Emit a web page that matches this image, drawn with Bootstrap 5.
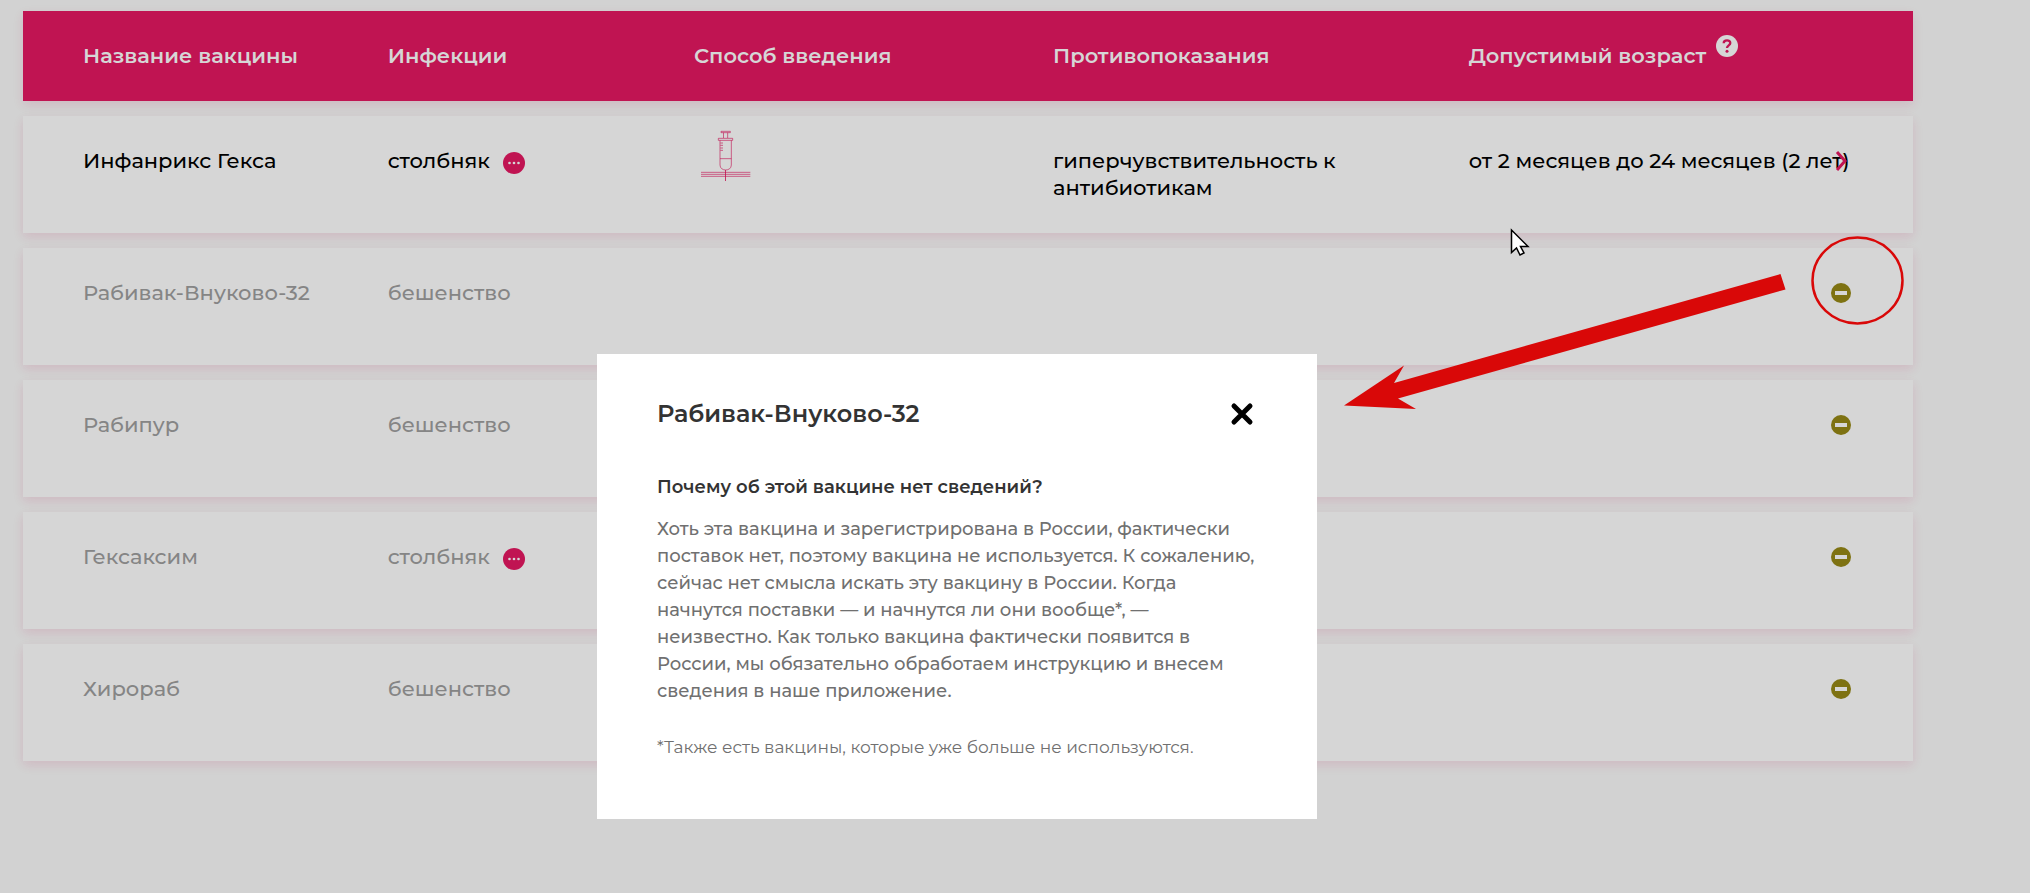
<!DOCTYPE html>
<html lang="ru">
<head>
<meta charset="utf-8">
<meta name="viewport" content="width=device-width, initial-scale=1">
<title>Вакцины</title>
<link rel="stylesheet" href="https://cdn.jsdelivr.net/npm/bootstrap@5.3.0/dist/css/bootstrap.min.css">
<style>
  :root { --brand: #c01452; --muted: #858585; }
  body { background: #d2d2d2; color: #000; font-family: Montserrat, Inter, sans-serif; font-size: 21px; font-weight: 500; line-height: 27px; padding-top: 11px; overflow-x: hidden; }
  .vaccines { width: calc(100% - 140px); margin: -15px 0 0 23px; table-layout: fixed; border-collapse: separate; border-spacing: 0 15px; }
  .vaccines tr { background: #d6d6d6; box-shadow: 0 4px 10px rgba(192, 20, 82, .12); }
  .vaccines td, .vaccines th { padding: 31px 0 0; vertical-align: top; white-space: nowrap; }
  .vaccines td { height: 117px; }
  .vaccines thead td, .vaccines th { height: 90px; font-weight: 600; }
  .vaccines thead tr { background: var(--brand); color: #d6d6d6; }
  .vaccines tr > :first-child { padding-left: 60px; }
  .vaccines td.route { padding: 14px 0 0 6px; }
  .vaccines .absent { color: var(--muted); }
  .c-name { width: 19.3%; } .c-inf { width: 16.2%; } .c-route { width: 19%; } .c-contra { width: 22%; } .c-age { width: 19.1%; }
  .plain { border: 0; padding: 0; background: none; color: inherit; display: inline-flex; }
  .plain svg, .route svg { display: block; }
  .more { margin-left: 13px; vertical-align: -6px; }
  .help { margin: -7px 0 0 10px; }
  .act { margin: 4px 0 0 1px; }
  .overlay { position: absolute; inset: 0 116px auto 0; padding-top: 354px; }
  .dialog { width: 720px; min-height: 465px; background: #fff; padding: 46px 60px 55px; color: #707070; font-size: 18px; }
  .dialog h2 { font-size: 24px; line-height: 28px; font-weight: 600; color: #333; }
  .dialog h3 { font-size: 18px; line-height: 27px; font-weight: 600; color: #333; margin: 46px 0 15px; }
  .dialog small { display: block; font-size: 17px; font-weight: 400; margin-top: 29px; white-space: nowrap; }
  .notes { position: absolute; left: 1340px; top: 225px; pointer-events: none; }
</style>
</head>
<body>
<svg class="d-none" aria-hidden="true">
  <symbol id="dots" viewBox="0 0 22 22"><circle cx="11" cy="11" r="11" fill="#c01452"/><g fill="#d6d6d6"><circle cx="6.5" cy="11" r="1.3"/><circle cx="11" cy="11" r="1.3"/><circle cx="15.500" cy="11" r="1.300"/></g></symbol>
  <symbol id="minus" viewBox="0 0 20 20"><circle cx="10" cy="10" r="10" fill="#7e7212"/><path fill="#d6d6d6" d="M4 8h12v4H4z"/></symbol>
</svg>

<table class="vaccines">
  <colgroup><col class="c-name"><col class="c-inf"><col class="c-route"><col class="c-contra"><col class="c-age"><col></colgroup>
  <thead>
    <tr>
      <th scope="col">Название вакцины</th>
      <th scope="col">Инфекции</th>
      <th scope="col">Способ введения</th>
      <th scope="col">Противопоказания</th>
      <th scope="col"><div class="d-flex align-items-start">Допустимый возраст<button class="plain help" type="button" aria-label="Подсказка"><svg width="22" height="22" viewBox="0 0 22 22"><circle cx="11" cy="11" r="11" fill="#d6d6d6"/><path d="M7.700 8.300C7.700 4.400 14.300 4.400 14.300 8.100 14.300 10.400 11 10.400 11 13" fill="none" stroke="#c01452" stroke-width="2.300"/><circle cx="11" cy="16.200" r="1.500" fill="#c01452"/></svg></button></div></th>
      <td></td>
    </tr>
  </thead>
  <tbody>
    <tr>
      <td>Инфанрикс Гекса</td>
      <td>столбняк<button class="plain more" type="button" aria-label="Все инфекции"><svg width="22" height="22"><use href="#dots"/></svg></button></td>
      <td class="route"><svg width="51" height="51" viewBox="33 60 153 153" fill="none" stroke="#c01452" stroke-width="2.500" stroke-opacity=".75" role="img" aria-label="Внутримышечно"><path d="M96 64h28v4H96zM103.500 68v16M116 68v16M88 85h43v6H88zM93 91v74c0 20 34 20 34 0V91M93 146h34M94 99h8M94 106h8M94 114h8M94 121h8M36 187h148M36 193h148M36 199h148"/><path d="M109.500 180v33" stroke-opacity="1"/></svg></td>
      <td>гиперчувствительность к<br>антибиотикам</td>
      <td>от 2 месяцев до 24 месяцев (2 лет)</td>
      <td><button class="plain act position-relative" type="button" aria-label="Подробнее"><svg width="20" height="20" viewBox="0 0 20 20"><path d="M6 1l8 9-8 9" fill="none" stroke="#c01452" stroke-width="3"/></svg></button></td>
    </tr>
    <tr class="absent">
      <td>Рабивак-Внуково-32</td><td>бешенство</td><td></td><td></td><td></td>
      <td><button class="plain act" type="button" aria-label="Нет сведений"><svg width="20" height="20"><use href="#minus"/></svg></button></td>
    </tr>
    <tr class="absent">
      <td>Рабипур</td><td>бешенство</td><td></td><td></td><td></td>
      <td><button class="plain act" type="button" aria-label="Нет сведений"><svg width="20" height="20"><use href="#minus"/></svg></button></td>
    </tr>
    <tr class="absent">
      <td>Гексаксим</td><td>столбняк<button class="plain more" type="button" aria-label="Все инфекции"><svg width="22" height="22"><use href="#dots"/></svg></button></td><td></td><td></td><td></td>
      <td><button class="plain act" type="button" aria-label="Нет сведений"><svg width="20" height="20"><use href="#minus"/></svg></button></td>
    </tr>
    <tr class="absent">
      <td>Хирораб</td><td>бешенство</td><td></td><td></td><td></td>
      <td><button class="plain act" type="button" aria-label="Нет сведений"><svg width="20" height="20"><use href="#minus"/></svg></button></td>
    </tr>
  </tbody>
</table>

<div class="overlay d-flex justify-content-center">
  <section class="dialog" role="dialog" aria-labelledby="dialog-title">
    <div class="d-flex justify-content-between align-items-center">
      <h2 class="mb-0" id="dialog-title">Рабивак-Внуково-32</h2>
      <button class="plain" type="button" aria-label="Закрыть"><svg width="28" height="26" viewBox="0 0 28 26"><path d="M5 5l16 16M21 5L5 21" stroke="#000" stroke-width="5" stroke-linecap="round"/></svg></button>
    </div>
    <h3>Почему об этой вакцине нет сведений?</h3>
    <p class="mb-0 text-nowrap">Хоть эта вакцина и зарегистрирована в России, фактически<br>поставок нет, поэтому вакцина не используется. К сожалению,<br>сейчас нет смысла искать эту вакцину в России. Когда<br>начнутся поставки — и начнутся ли они вообще*, —<br>неизвестно. Как только вакцина фактически появится в<br>России, мы обязательно обработаем инструкцию и внесем<br>сведения в наше приложение.</p>
    <small>*Также есть вакцины, которые уже больше не используются.</small>
  </section>
</div>

<!-- Hand-drawn marks and pointer lying over the page -->
<svg class="notes" width="570" height="190" viewBox="1340 225 570 190" aria-hidden="true">
  <path fill="#d90808" d="M1780.500 274L1785.500 289.500 1398 398.500 1416 409 1344 405.500 1404 365.500 1394 383z"/>
  <ellipse cx="1857.500" cy="280.500" rx="45" ry="43" fill="none" stroke="#d90808" stroke-width="2.500"/>
  <path fill="#fff" stroke="#000" stroke-width="1.500" d="M1511.500 230v22.500l5-4.500 3.500 7 4-2-3.500-6.500h7.500z"/>
</svg>
<script src="https://cdn.jsdelivr.net/npm/bootstrap@5.3.0/dist/js/bootstrap.bundle.min.js"></script>
</body>
</html>
